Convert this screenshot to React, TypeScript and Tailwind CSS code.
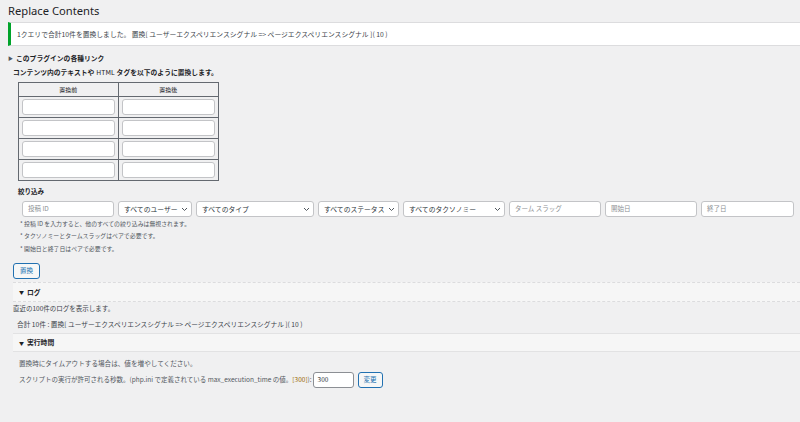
import React from 'react'

const font = { fontFamily: '"Noto Sans CJK JP", "Noto Sans", sans-serif' }

function Chevron() {
  return (
    <svg width="7" height="5" viewBox="0 0 7 5" className="shrink-0">
      <path d="M1 1l2.5 2.5L6 1" fill="none" stroke="#50575e" strokeWidth="1" />
    </svg>
  )
}

function Field({ w, text }: { w: string; text: string }) {
  return (
    <div className={`${w} h-[16px] bg-white border border-[#c3c4c7] rounded-[3px] flex items-center px-[5px] text-[6.5px] text-[#8c8f94]`}>
      {text}
    </div>
  )
}

function Select({ w, text }: { w: string; text: string }) {
  return (
    <div className={`${w} h-[16px] bg-white border border-[#c3c4c7] rounded-[3px] flex items-center justify-between pl-[5px] pr-[3px] text-[6.8px] text-[#2c3338]`}>
      <span className="whitespace-nowrap">{text}</span>
      <Chevron />
    </div>
  )
}

function Cell() {
  return (
    <div className="h-[20px] flex items-center px-[3px]">
      <div className="w-full h-[16px] bg-white border border-[#c3c4c7] rounded-[3px]" />
    </div>
  )
}

export default function App() {
  return (
    <div className="w-[800px] h-[422px] overflow-hidden bg-[#f0f0f1] text-[#3c434a]" style={font}>
      <div className="pl-[8px]">
        <h1 className="h-[21px] leading-[21px] text-[11.2px] text-[#1d2327] font-['Noto_Sans']">Replace Contents</h1>

        {/* Notice */}
        <div className="mt-[1px] h-[24px] bg-white border-y border-[#dcdcde] border-l-[3px] border-l-[#00a32a] flex items-center pl-[6px] text-[6.8px] text-[#3c434a] whitespace-nowrap">
          1クエリで合計10件を置換しました。 置換[ ユーザーエクスペリエンスシグナル =&gt; ページエクスペリエンスシグナル ]( 10 )
        </div>

        <div className="mt-[6px] h-[12px] flex items-center gap-[3px] text-[6.8px] font-bold text-[#1d2327]">
          <span className="text-[5px] text-[#50575e]">▶</span>
          <span>このプラグインの各種リンク</span>
        </div>
        <div className="mt-[2px] h-[12px] flex items-center pl-[5px] text-[6.8px] font-bold text-[#1d2327] whitespace-nowrap">
          コンテンツ内のテキストや <span className="font-normal mx-[2px]">HTML</span> タグを以下のように置換します。
        </div>

        {/* Table */}
        <div className="mt-[4px] ml-[10px] w-[201px] border border-[#646970] grid grid-cols-2">
          <div className="h-[14px] flex items-center justify-center text-[6px] text-[#1d2327] border-r border-b border-[#646970]">置換前</div>
          <div className="h-[14px] flex items-center justify-center text-[6px] text-[#1d2327] border-b border-[#646970]">置換後</div>
          {[0, 1, 2, 3].map((i) => (
            <React.Fragment key={i}>
              <div className={`border-r border-[#646970] ${i < 3 ? 'border-b' : ''}`}><Cell /></div>
              <div className={`border-[#646970] ${i < 3 ? 'border-b' : ''}`}><Cell /></div>
            </React.Fragment>
          ))}
        </div>

        {/* Filters */}
        <div className="mt-[5px] h-[12px] flex items-center pl-[10px] text-[6.5px] font-bold text-[#1d2327]">絞り込み</div>
        <div className="mt-[3px] flex gap-[4px] pl-[14px]">
          <Field w="w-[92px]" text="投稿 ID" />
          <Select w="w-[74px]" text="すべてのユーザー" />
          <Select w="w-[118px]" text="すべてのタイプ" />
          <Select w="w-[81px]" text="すべてのステータス" />
          <Select w="w-[102px]" text="すべてのタクソノミー" />
          <Field w="w-[92px]" text="ターム スラッグ" />
          <Field w="w-[92px]" text="開始日" />
          <Field w="w-[93px]" text="終了日" />
        </div>
        <div className="pl-[12px] text-[5.9px] text-[#50575e]">
          <div className="mt-[1px] h-[12px] flex items-center">* 投稿 ID を入力すると、他のすべての絞り込みは無視されます。</div>
          <div className="h-[13px] flex items-center">* タクソノミーとタームスラッグはペアで必要です。</div>
          <div className="h-[12px] flex items-center">* 開始日と終了日はペアで必要です。</div>
        </div>
        <button className="mt-[8px] ml-[5px] w-[27px] h-[16px] border border-[#2271b1] rounded-[3px] bg-[#f6f7f7] text-[6.5px] text-[#2271b1] flex items-center justify-center">置換</button>

        {/* Log */}
        <div className="mt-[3px] ml-[5px] h-[20px] bg-[#f6f6f6] border-y border-dashed border-[#dcdcde] flex items-center gap-[3px] pl-[6px] text-[6.8px] font-bold text-[#1d2327]">
          <span className="text-[5px]">▼</span>
          <span>ログ</span>
        </div>
        <div className="ml-[5px] mt-[1px] h-[12px] flex items-center text-[6.5px]">直近の100件のログを表示します。</div>
        <div className="ml-[9px] mt-[3px] h-[12px] flex items-center text-[6.7px] whitespace-nowrap">合計 10件 : 置換[ ユーザーエクスペリエンスシグナル =&gt; ページエクスペリエンスシグナル ]( 10 )</div>

        {/* Timeout */}
        <div className="mt-[3px] ml-[5px] h-[19px] bg-[#f6f6f6] border-y border-[#e2e2e3] flex items-center gap-[3px] pl-[6px] text-[6.8px] font-bold text-[#1d2327]">
          <span className="text-[5px]">▼</span>
          <span>実行時間</span>
        </div>
        <div className="mt-[6px] h-[12px] flex items-center pl-[11px] text-[6.6px] text-[#50575e]">置換時にタイムアウトする場合は、値を増やしてください。</div>
        <div className="mt-[2px] h-[16px] flex items-center pl-[11px] text-[6.5px] text-[#50575e] whitespace-nowrap">
          <span>スクリプトの実行が許可される秒数。(php.ini で定義されている max_execution_time の値。<span className="text-[#996800]">[300]</span>):</span>
          <div className="ml-[1px] w-[41px] h-[16px] bg-white border border-[#8c8f94] rounded-[3px] flex items-center px-[4px] text-[#2c3338]">300</div>
          <button className="ml-[4px] w-[25px] h-[16px] border border-[#2271b1] rounded-[3px] bg-[#f6f7f7] text-[#2271b1] flex items-center justify-center">変更</button>
        </div>
      </div>
    </div>
  )
}
